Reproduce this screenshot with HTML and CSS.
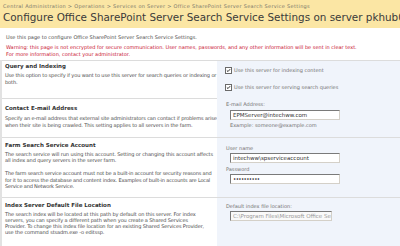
FILE: index.html
```html
<!DOCTYPE html>
<html lang="en">
  <head>
    <meta charset="UTF-8" />
    <title>Configure Office SharePoint Server Search Service Settings</title>
    <link rel="stylesheet" href="styles.css">
  </head>
  <body>
    <div class="titlebar">
      <div class="crumbs">Central Administration &gt; Operations &gt; Services on Server &gt; Office SharePoint Server Search Service Settings</div>
      <h1>Configure Office SharePoint Server Search Service Settings on server pkhub05</h1>
    </div>
    <div class="intro">
      <p>Use this page to configure Office SharePoint Server Search Service Settings.</p>
      <p class="warning">Warning: this page is not encrypted for secure communication. User names, passwords, and any other information will be sent in clear text.<br>For more information, contact your administrator.</p>
    </div>

    <div class="sections">
      <div class="section s1">
        <div class="info">
          <h2>Query and Indexing</h2>
          <p>Use this option to specify if you want to use this server for search queries or indexing or both.</p>
        </div>
        <div class="fields">
          <label class="check"><span class="box"><svg viewBox="0 0 7 7"><path d="M1.2 3.4 L2.8 5 L5.8 1.6" /></svg></span>Use this server for indexing content</label>
          <label class="check"><span class="box"><svg viewBox="0 0 7 7"><path d="M1.2 3.4 L2.8 5 L5.8 1.6" /></svg></span>Use this server for serving search queries</label>
        </div>
      </div>

      <div class="section s2">
        <div class="info">
          <h2>Contact E-mail Address</h2>
          <p>Specify an e-mail address that external site administrators can contact if problems arise when their site is being crawled. This setting applies to all servers in the farm.</p>
        </div>
        <div class="fields">
          <div class="label">E-mail Address:</div>
          <div class="input">EPMServer@intechww.com</div>
          <div class="hint">Example: someone@example.com</div>
        </div>
      </div>

      <div class="section s3">
        <div class="info">
          <h2>Farm Search Service Account</h2>
          <p>The search service will run using this account. Setting or changing this account affects all index and query servers in the server farm.</p>
          <p class="tight">The farm search service account must not be a built-in account for security reasons and for it to access the database and content index. Examples of built-in accounts are Local Service and Network Service.</p>
        </div>
        <div class="fields">
          <div class="label">User name</div>
          <div class="input">intechww\spserviceaccount</div>
          <div class="label pw">Password</div>
          <div class="input dots">&bull;&bull;&bull;&bull;&bull;&bull;&bull;&bull;&bull;&bull;</div>
        </div>
      </div>

      <div class="section s4">
        <div class="info">
          <h2>Index Server Default File Location</h2>
          <p>The search index will be located at this path by default on this server. For index servers, you can specify a different path when you create a Shared Services Provider. To change this index file location for an existing Shared Services Provider, use the command stsadm.exe -o editssp.</p>
        </div>
        <div class="fields">
          <div class="label">Default index file location:</div>
          <div class="input disabled">C:\Program Files\Microsoft Office Servers\12.0\Data</div>
        </div>
      </div>
    </div>
  </body>
</html>
```

FILE: styles.css
```css
body {
  margin: 0;
  font-family: "DejaVu Sans", Verdana, sans-serif;
  color: #4c4c4c;
  background: #fff;
  overflow: hidden;
  height: 246px;
}
p {
  margin: 0;
}
.titlebar {
  background: #fbe6a4;
  height: 28px;
  padding: 3px 0 0 3px;
  box-sizing: border-box;
  white-space: nowrap;
  overflow: hidden;
}
.crumbs {
  font-size: 5px;
  letter-spacing: 0.3px;
  color: #7a766a;
  line-height: 7px;
}
h1 {
  margin: 0;
  font-weight: normal;
  font-size: 10.4px;
  line-height: 15px;
  color: #3a3a3a;
}
.intro {
  padding: 6px 0 0 6px;
  height: 32px;
  box-sizing: border-box;
  font-size: 5px;
  line-height: 7px;
}
.intro p {
  margin-bottom: 3px;
}
.warning {
  color: #c8102e;
}
.sections {
  border-left: 2px solid #e2e2e2;
}
.section {
  display: grid;
  grid-template-columns: 215px 1fr;
  border-top: 1px solid #dcdcdc;
  box-sizing: border-box;
}
.info {
  padding: 3px 0 0 3px;
  font-size: 5.05px;
  line-height: 6.5px;
}
.info h2 {
  margin: 0 0 2px;
  font-size: 5.5px;
  line-height: 8px;
  font-weight: bold;
  color: #333;
}
.info p {
  margin-bottom: 4px;
  letter-spacing: -0.13px;
}
.fields {
  background: #f0f4fb;
  padding: 4px 0 0 9px;
  font-size: 5px;
  line-height: 7px;
  color: #707070;
}
.s1 {
  height: 38px;
}
.s1 .info {
  padding-top: 1px;
}
.s1 .fields {
  padding-top: 5px;
}
.s2 {
  height: 39px;
}
.s2 .info {
  padding-top: 5px;
}
.s2 .info h2 {
  margin-bottom: 2.5px;
}
.s2 .info p {
  line-height: 7px;
}
.s2 .fields {
  padding-top: 2px;
}
.s2 .input {
  margin-top: 2px;
}
.s3 {
  height: 60px;
}
.s3 .info h2 {
  margin-bottom: 1.5px;
}
.s3 .info p {
  margin-bottom: 6.5px;
}
.s3 .info .tight {
  letter-spacing: -0.19px;
}
.s3 .fields {
  padding-top: 7px;
}
.s3 .pw {
  margin-top: 3px;
}
.s4 {
  height: 60px;
}
.s4 .info p {
  line-height: 6px;
  max-width: 201px;
}
.s4 .fields {
  padding-top: 5px;
}
.check {
  display: flex;
  align-items: center;
  gap: 2px;
  height: 9px;
  margin-bottom: 8px;
  margin-left: -1px;
}
.box {
  width: 5px;
  height: 5px;
  border: 1px solid #6a6a6a;
  background: #fff;
  display: inline-block;
}
.box svg {
  display: block;
  width: 5px;
  height: 5px;
}
.box path {
  fill: none;
  stroke: #222;
  stroke-width: 1.3;
}
.input {
  width: 106px;
  height: 8px;
  margin: 1px 0 2px 4px;
  border: 1px solid #7a7a7a;
  border-right-color: #d4d0c8;
  border-bottom-color: #d4d0c8;
  background: #fff;
  font-size: 5.5px;
  line-height: 8px;
  padding-left: 2px;
  color: #333;
  white-space: nowrap;
  overflow: hidden;
}
.dots {
  letter-spacing: -0.6px;
  color: #111;
}
.disabled {
  color: #999;
  width: 98px;
  background: #fafafa;
}
.hint {
  margin-left: 4px;
}
```
